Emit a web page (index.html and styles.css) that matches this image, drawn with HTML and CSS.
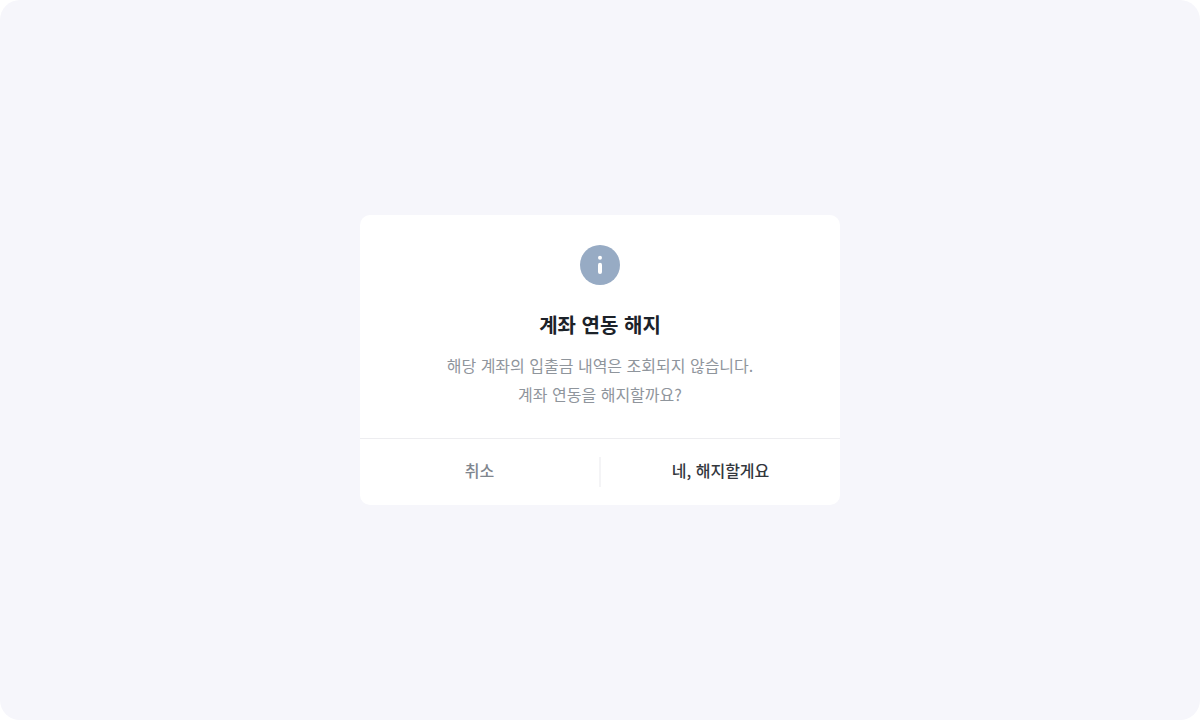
FILE: index.html
```html
<!DOCTYPE html>
<html lang="ko">
<head>
<meta charset="utf-8">
<meta name="viewport" content="width=device-width, initial-scale=1">
<title>계좌 연동 해지</title>
<link rel="stylesheet" href="styles.css">
</head>
<body>
<main class="stage">
  <section class="dialog" role="alertdialog" aria-labelledby="dialog-title" aria-describedby="dialog-text">
    <div class="dialog-body">
      <svg class="dialog-icon" viewBox="0 0 40 40" aria-hidden="true">
        <circle cx="20" cy="20" r="20" fill="#97abc4"/>
        <circle cx="20" cy="12.7" r="2" fill="#fff"/>
        <rect x="18" y="17.8" width="4" height="11.2" rx="2" fill="#fff"/>
      </svg>
      <h1 class="dialog-title" id="dialog-title">계좌 연동 해지</h1>
      <p class="dialog-text" id="dialog-text">해당 계좌의 입출금 내역은 조회되지 않습니다.<br>계좌 연동을 해지할까요?</p>
    </div>
    <div class="dialog-actions">
      <button class="action action-cancel" type="button">취소</button>
      <span class="action-divider"></span>
      <button class="action action-confirm" type="button">네, 해지할게요</button>
    </div>
  </section>
</main>
</body>
</html>
```
FILE: styles.css
```css
* {
  box-sizing: border-box;
}

body {
  margin: 0;
  background: #fff;
  font-family: "Noto Sans CJK KR", sans-serif;
}

.stage {
  display: flex;
  align-items: center;
  justify-content: center;
  min-height: 100vh;
  border-radius: 20px;
  background: #f6f6fb;
}

.dialog {
  width: 40%;
  min-width: 320px;
  border-radius: 10px;
  background: #fff;
}

.dialog-body {
  display: flex;
  flex-direction: column;
  align-items: center;
  padding: 30px 20px 29px;
  text-align: center;
}

.dialog-icon {
  width: 40px;
  height: 40px;
}

.dialog-title {
  margin: 24px 0 10px;
  color: #1c2229;
  font-size: 20px;
  font-weight: 700;
  line-height: 32px;
}

.dialog-text {
  margin: 0;
  color: #8f959c;
  font-size: 16px;
  line-height: 29px;
}

.dialog-actions {
  display: flex;
  align-items: center;
  border-top: 1px solid #ededf0;
}

.action {
  flex: 1;
  padding: 18px 0 22px;
  border: 0;
  background: none;
  font-family: inherit;
  font-size: 16px;
  font-weight: 500;
  line-height: 26px;
  cursor: pointer;
}

.action-cancel {
  color: #7f868e;
}

.action-confirm {
  color: #33373d;
}

.action-divider {
  width: 2px;
  height: 30px;
  background: #f4f4f6;
}
```
